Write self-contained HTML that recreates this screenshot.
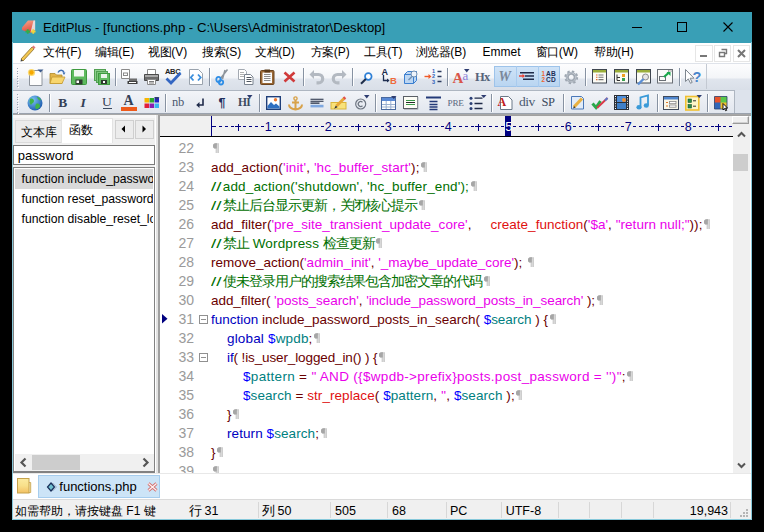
<!DOCTYPE html><html><head><meta charset="utf-8"><style>
*{margin:0;padding:0;box-sizing:border-box}
html,body{width:764px;height:532px;overflow:hidden;background:#000}
body{position:relative;font-family:"Liberation Sans",sans-serif;}
.a{position:absolute}
.t{position:absolute;white-space:pre;line-height:1}
.cj{display:inline-block;overflow:visible;text-align:center}
svg{position:absolute;overflow:visible}
</style></head><body>
<div class="a" style="left:12px;top:12px;width:740px;height:508px;background:#fff;"></div>
<div class="a" style="left:12px;top:12px;width:740px;height:31px;background:#399fb6;"></div>
<div class="t" style="left:43px;top:20.83px;font-size:13.2px;color:#000;">EditPlus - [functions.php - C:\Users\Administrator\Desktop]</div>
<div class="a" style="left:632px;top:27px;width:10px;height:1px;background:#000;"></div>
<div class="a" style="left:677px;top:22px;width:10px;height:10px;background:transparent;border:1px solid #000"></div>
<svg style="left:723px;top:22px" width="10" height="10"><path d="M0.5 0.5L9.5 9.5M9.5 0.5L0.5 9.5" stroke="#000" stroke-width="1.1"/></svg>
<svg style="left:21px;top:19px" width="16" height="17"><defs><linearGradient id="eg" x1="0" y1="0" x2="0.3" y2="1"><stop offset="0" stop-color="#f7a68e"/><stop offset="1" stop-color="#de4a3a"/></linearGradient></defs><path d="M1 8.5L7 1.5L14 1.5L14 11L9 14L1 11Z" fill="url(#eg)"/><path d="M12.5 1.5L14.2 1.5L14.2 11L9.5 13.5Z" fill="#e8edf2" opacity="0.85"/><path d="M4.5 12.5h4.5M6.75 10.2v4.6" stroke="#2fae4a" stroke-width="1.8"/><path d="M10 12.5h4.5M12.25 10.2v4.6" stroke="#f3d23a" stroke-width="1.8"/></svg>
<div class="a" style="left:12px;top:43px;width:740px;height:20px;background:#fff;"></div>
<div class="a" style="left:12px;top:63px;width:740px;height:1px;background:#dfe3ea;"></div>
<svg style="left:19px;top:44px" width="18" height="18"><path d="M3 16 L2 15 L13 3 L15 5 L4 17Z" fill="#f3c64f" stroke="#8a6d2b" stroke-width="0.8"/><path d="M13 3 L14.5 1.5 L16.5 3.5 L15 5Z" fill="#e07a7a"/><path d="M2 15 L1.5 17.5 L4 17Z" fill="#444"/></svg>
<div class="t" style="left:43px;top:46.35px;font-size:12px;color:#000;"><span class="cj" style="width:11.6px">文</span><span class="cj" style="width:11.6px">件</span>(F)</div>
<div class="t" style="left:95px;top:46.35px;font-size:12px;color:#000;"><span class="cj" style="width:11.6px">编</span><span class="cj" style="width:11.6px">辑</span>(E)</div>
<div class="t" style="left:148px;top:46.35px;font-size:12px;color:#000;"><span class="cj" style="width:11.6px">视</span><span class="cj" style="width:11.6px">图</span>(V)</div>
<div class="t" style="left:202px;top:46.35px;font-size:12px;color:#000;"><span class="cj" style="width:11.6px">搜</span><span class="cj" style="width:11.6px">索</span>(S)</div>
<div class="t" style="left:255px;top:46.35px;font-size:12px;color:#000;"><span class="cj" style="width:11.6px">文</span><span class="cj" style="width:11.6px">档</span>(D)</div>
<div class="t" style="left:310.5px;top:46.35px;font-size:12px;color:#000;"><span class="cj" style="width:11.6px">方</span><span class="cj" style="width:11.6px">案</span>(P)</div>
<div class="t" style="left:364px;top:46.35px;font-size:12px;color:#000;"><span class="cj" style="width:11.6px">工</span><span class="cj" style="width:11.6px">具</span>(T)</div>
<div class="t" style="left:415.5px;top:46.35px;font-size:12px;color:#000;"><span class="cj" style="width:11.6px">浏</span><span class="cj" style="width:11.6px">览</span><span class="cj" style="width:11.6px">器</span>(B)</div>
<div class="t" style="left:482.5px;top:46.35px;font-size:12px;color:#000;">Emmet</div>
<div class="t" style="left:535.5px;top:46.35px;font-size:12px;color:#000;"><span class="cj" style="width:11.6px">窗</span><span class="cj" style="width:11.6px">口</span>(W)</div>
<div class="t" style="left:594px;top:46.35px;font-size:12px;color:#000;"><span class="cj" style="width:11.6px">帮</span><span class="cj" style="width:11.6px">助</span>(H)</div>
<div class="a" style="left:695px;top:44.5px;width:17.5px;height:17.5px;background:#fff;border:1px solid #e6e6e6"></div>
<div class="a" style="left:713.5px;top:44.5px;width:17.5px;height:17.5px;background:#fff;border:1px solid #e6e6e6"></div>
<div class="a" style="left:732.5px;top:44.5px;width:17.5px;height:17.5px;background:#fff;border:1px solid #e6e6e6"></div>
<div class="a" style="left:700px;top:55px;width:7px;height:2px;background:#777;"></div>
<svg style="left:718px;top:48px" width="10" height="10"><path d="M3.5 1.5h5v4h-2M1.5 4.5h5v4h-5z" fill="none" stroke="#777" stroke-width="1.4"/></svg>
<svg style="left:737px;top:49px" width="9" height="9"><path d="M1 1L8 8M8 1L1 8" stroke="#777" stroke-width="2"/></svg>
<div class="a" style="left:13px;top:64px;width:738px;height:26px;background:linear-gradient(#fdfdfe 0,#f3f5f8 14px,#e0e5ed 15px,#d9dfe8 26px);"></div>
<div class="a" style="left:13px;top:90px;width:738px;height:24px;background:#dde3ec;"></div>
<div class="a" style="left:13px;top:90px;width:722px;height:24px;background:linear-gradient(#f2f4f8,#e1e6ee);border-top:1px solid #aeb6c1;border-right:1px solid #aeb6c1"></div>
<div class="a" style="left:706px;top:64px;width:1px;height:25px;background:#c3c9d2;"></div>
<div class="a" style="left:13px;top:113px;width:738px;height:1px;background:#9aa2ad;"></div>
<div class="a" style="left:12px;top:114px;width:740px;height:1px;background:#a7a7a7;"></div>
<div class="a" style="left:17px;top:68.0px;width:1px;height:1px;background:#9aa5b4;"></div>
<div class="a" style="left:18px;top:69.0px;width:1px;height:1px;background:#fff;"></div>
<div class="a" style="left:17px;top:70.5px;width:1px;height:1px;background:#9aa5b4;"></div>
<div class="a" style="left:18px;top:71.5px;width:1px;height:1px;background:#fff;"></div>
<div class="a" style="left:17px;top:73.0px;width:1px;height:1px;background:#9aa5b4;"></div>
<div class="a" style="left:18px;top:74.0px;width:1px;height:1px;background:#fff;"></div>
<div class="a" style="left:17px;top:75.5px;width:1px;height:1px;background:#9aa5b4;"></div>
<div class="a" style="left:18px;top:76.5px;width:1px;height:1px;background:#fff;"></div>
<div class="a" style="left:17px;top:78.0px;width:1px;height:1px;background:#9aa5b4;"></div>
<div class="a" style="left:18px;top:79.0px;width:1px;height:1px;background:#fff;"></div>
<div class="a" style="left:17px;top:80.5px;width:1px;height:1px;background:#9aa5b4;"></div>
<div class="a" style="left:18px;top:81.5px;width:1px;height:1px;background:#fff;"></div>
<div class="a" style="left:17px;top:83.0px;width:1px;height:1px;background:#9aa5b4;"></div>
<div class="a" style="left:18px;top:84.0px;width:1px;height:1px;background:#fff;"></div>
<div class="a" style="left:17px;top:85.5px;width:1px;height:1px;background:#9aa5b4;"></div>
<div class="a" style="left:18px;top:86.5px;width:1px;height:1px;background:#fff;"></div>
<div class="a" style="left:17px;top:94.0px;width:1px;height:1px;background:#9aa5b4;"></div>
<div class="a" style="left:18px;top:95.0px;width:1px;height:1px;background:#fff;"></div>
<div class="a" style="left:17px;top:96.5px;width:1px;height:1px;background:#9aa5b4;"></div>
<div class="a" style="left:18px;top:97.5px;width:1px;height:1px;background:#fff;"></div>
<div class="a" style="left:17px;top:99.0px;width:1px;height:1px;background:#9aa5b4;"></div>
<div class="a" style="left:18px;top:100.0px;width:1px;height:1px;background:#fff;"></div>
<div class="a" style="left:17px;top:101.5px;width:1px;height:1px;background:#9aa5b4;"></div>
<div class="a" style="left:18px;top:102.5px;width:1px;height:1px;background:#fff;"></div>
<div class="a" style="left:17px;top:104.0px;width:1px;height:1px;background:#9aa5b4;"></div>
<div class="a" style="left:18px;top:105.0px;width:1px;height:1px;background:#fff;"></div>
<div class="a" style="left:17px;top:106.5px;width:1px;height:1px;background:#9aa5b4;"></div>
<div class="a" style="left:18px;top:107.5px;width:1px;height:1px;background:#fff;"></div>
<div class="a" style="left:17px;top:109.0px;width:1px;height:1px;background:#9aa5b4;"></div>
<div class="a" style="left:18px;top:110.0px;width:1px;height:1px;background:#fff;"></div>
<div class="a" style="left:17px;top:111.5px;width:1px;height:1px;background:#9aa5b4;"></div>
<div class="a" style="left:18px;top:112.5px;width:1px;height:1px;background:#fff;"></div>
<svg style="left:27px;top:68px" width="17" height="18" viewBox="0 0 17 18"><path d="M2.5 2.5h12.5v15h-12.5z" fill="#fdfdfd" stroke="#8e949c"/><circle cx="4.5" cy="4.5" r="3.6" fill="#ffd24a" opacity="0.8"/><circle cx="4.5" cy="4.5" r="2.2" fill="#f7a800"/><path d="M10.5 1.5h6L13.5 4.5Z" fill="#3b5a8c"/></svg>
<svg style="left:49px;top:68px" width="17" height="17" viewBox="0 0 17 17"><path d="M1 5.5h5l1.5 1.5h5.5v8.5h-12z" fill="#e3b54a" stroke="#b08a2a" stroke-width="0.8"/><path d="M3 9h13l-3 6.5h-12z" fill="#f8d66e" stroke="#c49a32" stroke-width="0.8"/><path d="M9 4.5c1.5-3 5-3 6 0" fill="none" stroke="#3f6fb3" stroke-width="1.5"/><path d="M13.5 4.5h3l-1.5 2.5z" fill="#3f6fb3"/></svg>
<svg style="left:71px;top:69px" width="16" height="16" viewBox="0 0 16 16"><rect x="0.5" y="0.5" width="15" height="15" rx="1" fill="#5dba5d" stroke="#3f9a3f"/><rect x="3" y="1" width="10" height="6.5" fill="#f2f8f2"/><rect x="4.5" y="10.5" width="7" height="5" fill="#2f3a2f"/><rect x="5.5" y="11.5" width="2.5" height="2.5" fill="#fff"/></svg>
<svg style="left:94px;top:69px" width="16" height="16" viewBox="0 0 16 16"><rect x="0.5" y="0.5" width="11" height="11" fill="#8fd08f" stroke="#52a052"/><rect x="2.5" y="2.5" width="11" height="11" fill="#7cc67c" stroke="#52a052"/><rect x="4.5" y="4.5" width="11" height="11" fill="#62bb62" stroke="#3f9a3f"/><rect x="7" y="5" width="6" height="4" fill="#eaf5ea"/><rect x="7" y="11" width="6" height="4" fill="#2c3a2c"/><rect x="9" y="12" width="2" height="2" fill="#fff"/></svg>
<div class="a" style="left:114.5px;top:68px;width:1px;height:18px;background:#8792a2"></div><div class="a" style="left:115.5px;top:68px;width:1px;height:18px;background:#fff"></div>
<svg style="left:121px;top:69px" width="17" height="16" viewBox="0 0 17 16"><path d="M0.5 0.5h8v9h-8z" fill="#fff" stroke="#8a8a8a"/><rect x="2.5" y="4" width="4" height="2.5" fill="none" stroke="#8a8a8a"/><rect x="8" y="9.5" width="8" height="3" fill="#6d6d6d"/><rect x="6.5" y="12" width="10" height="3" fill="#3f3f3f"/><rect x="8" y="13" width="7" height="1" fill="#fff"/></svg>
<svg style="left:143px;top:69px" width="17" height="16" viewBox="0 0 17 16"><path d="M4.5 0.5h8v5h-8z" fill="#fff" stroke="#8a8a8a"/><path d="M1.5 5.5h14v6h-14z" fill="#6b6b6b" stroke="#4a4a4a"/><rect x="2" y="6" width="13" height="2" fill="#a8a8a8"/><path d="M4.5 10.5h8v5h-8z" fill="#fff" stroke="#8a8a8a"/><path d="M6 12.5h5M6 14h5" stroke="#555" stroke-width="0.8"/></svg>
<div class="t" style="left:165px;top:68px;font-size:7.5px;font-weight:bold;color:#222;letter-spacing:-0.3px">ABC</div>
<svg style="left:165px;top:71px" width="17" height="14" viewBox="0 0 17 14"><path d="M1.5 7.5L6 12L15.5 2" fill="none" stroke="#3466c2" stroke-width="2.8"/></svg>
<svg style="left:188px;top:69px" width="16" height="16" viewBox="0 0 16 16"><path d="M1.5 0.5h9l4 4v11h-13z" fill="#fff" stroke="#9aa3ad"/><path d="M5.5 5.5L2.8 8.5L5.5 11.5M10 5.5L12.7 8.5L10 11.5" fill="none" stroke="#3c8fdc" stroke-width="1.8"/></svg>
<div class="a" style="left:208.5px;top:68px;width:1px;height:18px;background:#8792a2"></div><div class="a" style="left:209.5px;top:68px;width:1px;height:18px;background:#fff"></div>
<svg style="left:215px;top:69px" width="14" height="16" viewBox="0 0 14 16"><path d="M5.5 9.5L12.5 0.5M7.5 10L10 1" stroke="#8d949c" stroke-width="1.5"/><ellipse cx="3.5" cy="10.5" rx="2.2" ry="2.6" fill="none" stroke="#2f8ee6" stroke-width="1.8"/><ellipse cx="6" cy="13.3" rx="2.2" ry="2.2" fill="none" stroke="#2f8ee6" stroke-width="1.8"/></svg>
<svg style="left:238px;top:69px" width="16" height="16" viewBox="0 0 16 16"><path d="M0.5 0.5h6l2 2v8h-8z" fill="#fff" stroke="#a4aab2"/><path d="M2 3.5h4M2 5.5h4M2 7.5h4" stroke="#b0b0b0" stroke-width="1"/><path d="M6.5 5.5h6l2.5 2.5v7.5h-8.5z" fill="#fff" stroke="#7b8490"/><path d="M8.5 8.5h5M8.5 10.5h5M8.5 12.5h5" stroke="#4f5660" stroke-width="1"/></svg>
<svg style="left:260px;top:69px" width="15" height="16" viewBox="0 0 15 16"><rect x="0.5" y="1.5" width="13.5" height="14" rx="1" fill="#9a6834" stroke="#6a4420"/><rect x="2.5" y="3.5" width="9.5" height="10.5" fill="#fafafa"/><rect x="4.5" y="0.5" width="5.5" height="3" fill="#5a3a1a"/><path d="M4 5.5h6.5M4 7.5h6.5M4 9.5h6.5M4 11.5h6.5" stroke="#8a8a8a" stroke-width="1"/></svg>
<svg style="left:283px;top:71px" width="13" height="12" viewBox="0 0 13 12"><path d="M1.5 1.5L11.5 10.5M11.5 1.5L1.5 10.5" stroke="#d03a3a" stroke-width="2.6"/></svg>
<div class="a" style="left:302.5px;top:68px;width:1px;height:18px;background:#8792a2"></div><div class="a" style="left:303.5px;top:68px;width:1px;height:18px;background:#fff"></div>
<svg style="left:309px;top:69px" width="16" height="16" viewBox="0 0 16 16"><path d="M3 5.5h6.5a4.2 4.2 0 0 1 0 8.4h-2" fill="none" stroke="#b3b9c1" stroke-width="3.2"/><path d="M0.5 5.5L5 1v9z" fill="#b3b9c1"/></svg>
<svg style="left:331px;top:69px" width="16" height="16" viewBox="0 0 16 16"><path d="M13 5.5h-6.5a4.2 4.2 0 0 0 0 8.4h2" fill="none" stroke="#b3b9c1" stroke-width="3.2"/><path d="M15.5 5.5L11 1v9z" fill="#b3b9c1"/></svg>
<div class="a" style="left:352px;top:68px;width:1px;height:18px;background:#8792a2"></div><div class="a" style="left:353px;top:68px;width:1px;height:18px;background:#fff"></div>
<svg style="left:359px;top:71px" width="15" height="14" viewBox="0 0 15 14"><circle cx="9.3" cy="5.5" r="3.3" fill="#fff" stroke="#2d7fd6" stroke-width="1.7"/><path d="M6.8 8L2 12.8" stroke="#1e2d4a" stroke-width="2"/></svg>
<div class="t" style="left:381.5px;top:67.5px;font-size:9px;font-weight:bold;color:#1e2d50">A</div>
<svg style="left:381px;top:75px" width="10" height="9" viewBox="0 0 10 9"><path d="M2.5 0v5.5h5" fill="none" stroke="#1e2d50" stroke-width="1.3"/><path d="M6 3.5l2.5 2-2.5 2z" fill="#1e2d50"/></svg>
<div class="t" style="left:390px;top:76px;font-size:9.5px;font-weight:bold;color:#f06a3a">B</div>
<svg style="left:403px;top:70px" width="16" height="15" viewBox="0 0 16 15"><path d="M1.5 4.5l3-3h9v9l-3 3h-9z" fill="#bcd6f2" stroke="#3b7fd0"/><path d="M1.5 4.5h9v9M10.5 4.5l3-3" fill="none" stroke="#3b7fd0"/><circle cx="11" cy="4" r="3" fill="#eef4fb" stroke="#6f8fb3"/><path d="M9 6.5L5.5 10" stroke="#6f8fb3" stroke-width="1.5"/></svg>
<svg style="left:424px;top:70px" width="18" height="16" viewBox="0 0 18 16"><path d="M0.5 6.5h5" stroke="#f05a28" stroke-width="1.4"/><path d="M4.5 4l3 2.5-3 2.5z" fill="#f05a28"/><path d="M13.5 1.5h4M13.5 6.5h4M13.5 11.5h4" stroke="#2b3b5e" stroke-width="1.4"/></svg>
<div class="t" style="left:432px;top:69px;font-size:5.6px;line-height:5.4px;font-weight:bold;color:#2f62b8">1<br>2<br>3</div>
<div class="a" style="left:447px;top:68px;width:1px;height:18px;background:#8792a2"></div><div class="a" style="left:448px;top:68px;width:1px;height:18px;background:#fff"></div>
<div class="t" style="left:452.5px;top:71.31px;font-size:15px;color:#d9564a;font-family:'Liberation Serif',serif;font-weight:bold;font-style:normal;letter-spacing:0px">A</div>
<div class="t" style="left:462.5px;top:69.30199999999999px;font-size:13px;color:#8a7fd8;font-family:'Liberation Serif',serif;font-weight:normal;font-style:normal;letter-spacing:0px">a</div>
<svg style="left:464px;top:69px" width="6" height="4" viewBox="0 0 6 4"><path d="M0 0H5.5L2.75 3.5Z" fill="#2d3c70"/></svg>
<div class="t" style="left:475px;top:71.225px;font-size:12.5px;color:#56647a;font-family:'Liberation Serif',serif;font-weight:bold;font-style:normal;letter-spacing:-0.6px">Hx</div>
<div class="a" style="left:494px;top:66px;width:66px;height:21px;background:linear-gradient(#cfe3f7,#b9d5f1);border:1px solid #9dc3ea"></div>
<div class="a" style="left:515.5px;top:66px;width:1px;height:21px;background:#a9cbee"></div><div class="a" style="left:538px;top:66px;width:1px;height:21px;background:#a9cbee"></div>
<div class="t" style="left:498.5px;top:69.956px;font-size:14px;color:#7a879a;font-family:'Liberation Serif',serif;font-weight:bold;font-style:italic;letter-spacing:0px">W</div>
<svg style="left:519px;top:72px" width="16" height="9" viewBox="0 0 16 9"><path d="M1 0.8h14M6 4h9M4 7.2h11" stroke="#1f2a48" stroke-width="1.5"/><path d="M0 4h4" stroke="#ee3a2a" stroke-width="1.4"/><path d="M3.5 2l2.5 2-2.5 2z" fill="#ee3a2a"/></svg>
<div class="t" style="left:541.5px;top:71px;font-size:6.3px;line-height:6px;font-weight:bold;color:#f0642e">1<br>2</div>
<div class="t" style="left:546px;top:71px;font-size:6.6px;line-height:6px;font-weight:bold;color:#1e2d55;letter-spacing:0.2px">AB<br>CD</div>
<svg style="left:563px;top:69px" width="17" height="17" viewBox="0 0 17 17"><g transform="translate(8.25,8.25)"><circle r="5.8" fill="none" stroke="#9ea6b0" stroke-width="2.2" stroke-dasharray="2.3 2.25"/><circle r="5" fill="none" stroke="#aab2bc" stroke-width="1.2"/><circle r="3.3" fill="none" stroke="#a0a8b2" stroke-width="1.8"/></g></svg>
<div class="a" style="left:584.5px;top:68px;width:1px;height:18px;background:#8792a2"></div><div class="a" style="left:585.5px;top:68px;width:1px;height:18px;background:#fff"></div>
<svg style="left:591.5px;top:69px" width="15" height="15" viewBox="0 0 15 15"><rect x="0.5" y="0.5" width="14" height="13.5" fill="#fbfbf5" stroke="#3f4650"/><rect x="1" y="1" width="13" height="2.5" fill="#9aae3a"/><path d="M4 6h1.5M4 8.3h1.5M4 10.6h1.5" stroke="#e86a2a" stroke-width="1.1"/><path d="M6.5 6h5M6.5 8.3h5M6.5 10.6h5" stroke="#777" stroke-width="1.1"/></svg>
<svg style="left:613.5px;top:69px" width="15" height="15" viewBox="0 0 15 15"><rect x="0.5" y="0.5" width="14" height="13.5" fill="#fbfbf5" stroke="#3f4650"/><rect x="1" y="1" width="13" height="2.5" fill="#9aae3a"/><path d="M3 5.5v6h3M3 8.5h3" fill="none" stroke="#333" stroke-width="1"/><rect x="8" y="5" width="3" height="3" fill="#f0a020"/><rect x="8" y="9" width="3" height="3" fill="#3aa050"/></svg>
<svg style="left:635.5px;top:69px" width="15" height="15" viewBox="0 0 15 15"><rect x="0.5" y="0.5" width="14" height="13.5" fill="#fbfbf5" stroke="#3f4650"/><rect x="1" y="1" width="13" height="2.5" fill="#9aae3a"/><circle cx="9.5" cy="8" r="3" fill="#e6e6e6" stroke="#8a8a8a"/><path d="M7.5 10L2 15.5" stroke="#5b8fd6" stroke-width="2.4"/></svg>
<svg style="left:657px;top:69px" width="16" height="15" viewBox="0 0 16 15"><rect x="0.5" y="0.5" width="15" height="13.5" fill="#fafafa" stroke="#6a6f76"/><path d="M11 2h1M12.5 2h1M14 2h0.6" stroke="#555"/><rect x="2.5" y="7.5" width="6" height="4" fill="none" stroke="#6a6f76"/><path d="M7 8L12 3.5" stroke="#19a84a" stroke-width="2.2"/><path d="M9.5 3h4v4z" fill="#19a84a"/></svg>
<div class="a" style="left:678.5px;top:68px;width:1px;height:18px;background:#8792a2"></div><div class="a" style="left:679.5px;top:68px;width:1px;height:18px;background:#fff"></div>
<svg style="left:684px;top:69px" width="18" height="16" viewBox="0 0 18 16"><path d="M1.5 0.5v12l2.8-2.6 2.2 4.4 1.7-.9-2.1-4.2h3.9z" fill="#fff" stroke="#7e868f" stroke-width="1"/></svg>
<div class="t" style="left:692.5px;top:70.233px;font-size:14.5px;color:#4a86cc;font-family:'Liberation Sans',serif;font-weight:bold;font-style:normal;letter-spacing:0px">?</div>
<svg style="left:26.5px;top:95px" width="16" height="16" viewBox="0 0 16 16"><defs><radialGradient id="gb" cx="0.35" cy="0.3" r="0.8"><stop offset="0" stop-color="#7ec6f5"/><stop offset="1" stop-color="#1452a8"/></radialGradient></defs><circle cx="8" cy="8" r="7.5" fill="url(#gb)"/><path d="M3 4c2-1 4 0 4 2s-2 2-3 4c-1-1-2-3-1-6zM9 9c2-1 4 0 4 2s-2 3-4 3c-1-1-1-3 0-5zM10 2c2 0 3 1 4 3-1 1-3 0-4-3z" fill="#3fb44a"/></svg>
<div class="a" style="left:48.5px;top:94px;width:1px;height:18px;background:#8792a2"></div><div class="a" style="left:49.5px;top:94px;width:1px;height:18px;background:#fff"></div>
<div class="t" style="left:58.3px;top:96.47900000000001px;font-size:13.5px;color:#344055;font-family:'Liberation Serif',serif;font-weight:bold;font-style:normal;letter-spacing:0px">B</div>
<div class="t" style="left:80.5px;top:96.47900000000001px;font-size:13.5px;color:#344055;font-family:'Liberation Serif',serif;font-weight:bold;font-style:italic;letter-spacing:0px">I</div>
<div class="t" style="left:102px;top:95.179px;font-size:13.5px;color:#344055;font-family:'Liberation Serif',serif;font-weight:normal;font-style:normal;letter-spacing:0px">U</div>
<div class="a" style="left:103px;top:107.5px;width:9px;height:1px;background:#3d4b60"></div>
<div class="t" style="left:123.5px;top:94.156px;font-size:14px;color:#344055;font-family:'Liberation Serif',serif;font-weight:bold;font-style:normal;letter-spacing:0px">A</div>
<div class="a" style="left:121px;top:107px;width:16px;height:4px;background:#ee5a1a"></div>
<svg style="left:143.5px;top:97px" width="16" height="13" viewBox="0 0 16 13"><rect x="0.5" y="1" width="4.5" height="4.5" fill="#f7b500"/><rect x="5.5" y="1" width="4.5" height="4.5" fill="#2ea82e"/><rect x="10.5" y="1" width="4.5" height="4.5" fill="#2424c8"/><rect x="0.5" y="6.5" width="4.5" height="4.5" fill="#e21f3a"/><rect x="5.5" y="6.5" width="4.5" height="4.5" fill="#8a1fb0"/><rect x="10.5" y="6.5" width="4.5" height="4.5" fill="#3ab6f0"/><path d="M10 0H15.5L12.75 3Z" fill="#2d3c70"/></svg>
<div class="a" style="left:164.5px;top:94px;width:1px;height:18px;background:#8792a2"></div><div class="a" style="left:165.5px;top:94px;width:1px;height:18px;background:#fff"></div>
<div class="t" style="left:172px;top:96.02499999999999px;font-size:12.5px;color:#4a5870;font-family:'Liberation Serif',serif;font-weight:normal;font-style:normal;letter-spacing:-0.3px">nb</div>
<svg style="left:196px;top:98px" width="9" height="11" viewBox="0 0 9 11"><path d="M7 0.5v6.5h-5" fill="none" stroke="#1f2a4a" stroke-width="1.6"/><path d="M3.5 4L0.2 7L3.5 10z" fill="#1f2a4a"/></svg>
<div class="t" style="left:218.5px;top:97.425px;font-size:12.5px;color:#1f2f5e;font-family:'Liberation Sans',serif;font-weight:bold;font-style:normal;letter-spacing:0px">¶</div>
<div class="t" style="left:238px;top:96.871px;font-size:11.5px;color:#3d4b60;font-family:'Liberation Serif',serif;font-weight:bold;font-style:normal;letter-spacing:-0.6px">HI</div>
<svg style="left:247px;top:95px" width="6" height="4" viewBox="0 0 6 4"><path d="M0 0H5.5L2.75 3.5Z" fill="#2d3c70"/></svg>
<div class="a" style="left:258.5px;top:94px;width:1px;height:18px;background:#8792a2"></div><div class="a" style="left:259.5px;top:94px;width:1px;height:18px;background:#fff"></div>
<svg style="left:266px;top:96px" width="15" height="14" viewBox="0 0 15 14"><rect x="0.7" y="0.7" width="13.6" height="12.6" fill="#fff" stroke="#1f3f7a" stroke-width="1.4"/><path d="M1.5 10L5 6l3 3 2-1.5 3.5 3V12.5h-12z" fill="#2f6fc0"/><circle cx="9.5" cy="3.8" r="1.7" fill="#f07a30"/></svg>
<svg style="left:288px;top:96px" width="15" height="14" viewBox="0 0 15 14"><circle cx="7.5" cy="2.5" r="1.6" fill="none" stroke="#d8a24a" stroke-width="1.4"/><path d="M7.5 4v9.5M4 6.5h7M1 8.5c0 3 3 4.5 6.5 5 3.5-.5 6.5-2 6.5-5" fill="none" stroke="#d8a24a" stroke-width="2"/></svg>
<svg style="left:310px;top:98px" width="14" height="10" viewBox="0 0 14 10"><path d="M0.5 1.3h13M0.5 3.2h13M0.5 5.1h9" stroke="#1f2a40" stroke-width="1.1"/><rect x="0.5" y="6.8" width="13" height="2.6" fill="#7ea8e0"/></svg>
<svg style="left:330px;top:96px" width="18" height="14" viewBox="0 0 18 14"><rect x="1" y="6.5" width="15" height="6.5" fill="#f8e27a" stroke="#d9b53a"/><path d="M6.5 10L14.5 2" stroke="#e8a838" stroke-width="3"/><path d="M13.5 1l2 2" stroke="#e05050" stroke-width="2"/><path d="M6 10.5l-0.5 1 1-.5z" stroke="#333" stroke-width="1.2"/></svg>
<svg style="left:355px;top:98px" width="12" height="12" viewBox="0 0 12 12"><circle cx="5.7" cy="6" r="5" fill="none" stroke="#6e7682" stroke-width="1.2"/><path d="M7.5 4.2a2.5 2.5 0 1 0 0 3.6" fill="none" stroke="#6e7682" stroke-width="1.2"/></svg>
<svg style="left:364px;top:95px" width="6" height="4" viewBox="0 0 6 4"><path d="M0 0H5.5L2.75 3.5Z" fill="#2d3c70"/></svg>
<div class="a" style="left:374.5px;top:94px;width:1px;height:18px;background:#8792a2"></div><div class="a" style="left:375.5px;top:94px;width:1px;height:18px;background:#fff"></div>
<svg style="left:381px;top:96px" width="16" height="14" viewBox="0 0 16 14"><rect x="0.5" y="1.5" width="14" height="12" fill="#fff" stroke="#4a6aa0"/><rect x="1" y="2" width="13" height="3" fill="#5a8ad6"/><path d="M1 8.5h13M1 11h13M5.2 5v8M9.8 5v8" stroke="#9ab0d0" stroke-width="1"/><path d="M10 0H15.5L12.75 3Z" fill="#2d3c70"/></svg>
<svg style="left:403px;top:96px" width="16" height="14" viewBox="0 0 16 14"><rect x="0.5" y="0.5" width="14" height="12" fill="#fdfdf6" stroke="#5a5f66"/><path d="M15 1v12.5H1" fill="none" stroke="#b8bcc2"/><path d="M3 4.5h9M3 8.5h9" stroke="#3a9a48" stroke-width="1"/><path d="M3 6.5h9" stroke="#2a2a2a" stroke-width="1"/></svg>
<svg style="left:426px;top:96px" width="15" height="14" viewBox="0 0 15 14"><path d="M0 1.5h15" stroke="#243a78" stroke-width="2"/><path d="M3.5 5.5h8M3.5 8.5h8M3.5 11h8M3.5 13.5h8" stroke="#243a78" stroke-width="1.3"/></svg>
<div class="t" style="left:447.5px;top:98.5168px;font-size:9.2px;color:#5a6880;font-family:'Liberation Serif',serif;font-weight:normal;font-style:normal;letter-spacing:-0.2px">PRE</div>
<svg style="left:469px;top:95px" width="18" height="15" viewBox="0 0 18 15"><circle cx="2" cy="3.2" r="1.5" fill="#2a3f75"/><circle cx="2" cy="8.5" r="1.5" fill="#2a3f75"/><circle cx="2" cy="13.5" r="1.5" fill="#2a3f75"/><path d="M5.5 3.2h8M5.5 8.5h8M5.5 13.5h8" stroke="#1f2a48" stroke-width="1.3"/><path d="M12 0H17.5L14.75 3Z" fill="#2d3c70"/></svg>
<div class="a" style="left:490.5px;top:94px;width:1px;height:18px;background:#8792a2"></div><div class="a" style="left:491.5px;top:94px;width:1px;height:18px;background:#fff"></div>
<svg style="left:498px;top:96px" width="15" height="14" viewBox="0 0 15 14"><path d="M2.5 0.5h8l3.5 3.5v9.5h-11.5z" fill="#fff" stroke="#6a7888"/></svg>
<div class="t" style="left:497.5px;top:96.348px;font-size:12px;color:#c01a20;font-family:'Liberation Serif',serif;font-weight:bold;font-style:normal;letter-spacing:0px">A</div>
<div class="t" style="left:519px;top:95.07900000000001px;font-size:13.5px;color:#4a5870;font-family:'Liberation Serif',serif;font-weight:normal;font-style:normal;letter-spacing:-0.5px">div</div>
<div class="t" style="left:541.5px;top:95.925px;font-size:12.5px;color:#3d4b60;font-family:'Liberation Serif',serif;font-weight:normal;font-style:normal;letter-spacing:-0.4px">SP</div>
<div class="a" style="left:562.5px;top:94px;width:1px;height:18px;background:#8792a2"></div><div class="a" style="left:563.5px;top:94px;width:1px;height:18px;background:#fff"></div>
<svg style="left:569.5px;top:95px" width="16" height="15" viewBox="0 0 16 15"><path d="M1.5 1.5h10l2 2v10.5h-12z" fill="#e2ecf8" stroke="#4a78b8"/><path d="M4 12L12 3.5" stroke="#e8b040" stroke-width="3.2"/><path d="M3 13.5l1-2.5 1.5 1.5z" fill="#333"/></svg>
<svg style="left:590.5px;top:96px" width="18" height="14" viewBox="0 0 18 14"><path d="M1.5 7.5L5 11.5L9.5 5" fill="none" stroke="#2aa84a" stroke-width="3"/><path d="M6 12L16.5 2" stroke="#d83a4a" stroke-width="2"/><path d="M14 4.5L16.5 2" stroke="#5a78c8" stroke-width="2"/></svg>
<svg style="left:614px;top:95px" width="15" height="15" viewBox="0 0 15 15"><rect x="0" y="0" width="15" height="15" fill="#2a2f38"/><rect x="3" y="1" width="9" height="6" fill="#4f8ed8"/><rect x="3" y="8" width="9" height="6" fill="#3f7fc8"/><circle cx="10" cy="5" r="2" fill="#f09030"/><path d="M1.5 1v13M13.5 1v13" stroke="#fff" stroke-width="1" stroke-dasharray="1 1.4"/></svg>
<svg style="left:636px;top:95px" width="13" height="15" viewBox="0 0 13 15"><path d="M4.5 12V2.5L12 0.5V10" fill="none" stroke="#3a9ad8" stroke-width="1.8"/><ellipse cx="3" cy="12.3" rx="2.6" ry="2.2" fill="#3a9ad8"/><ellipse cx="10.3" cy="10.5" rx="2.6" ry="2.2" fill="#3a9ad8"/></svg>
<div class="a" style="left:656.5px;top:94px;width:1px;height:18px;background:#8792a2"></div><div class="a" style="left:657.5px;top:94px;width:1px;height:18px;background:#fff"></div>
<svg style="left:662.5px;top:96px" width="16" height="14" viewBox="0 0 16 14"><rect x="0.5" y="0.5" width="15" height="13" fill="#f8f6e8" stroke="#3f4a5c"/><rect x="1" y="1" width="14" height="2.5" fill="#4f86d0"/><path d="M3 6.5h2M3 10h2" stroke="#e0782a" stroke-width="1"/><rect x="6.5" y="5.5" width="6.5" height="2.2" fill="#fff" stroke="#888" stroke-width="0.8"/><rect x="6.5" y="9" width="6.5" height="2.2" fill="#fff" stroke="#888" stroke-width="0.8"/></svg>
<svg style="left:684.5px;top:95px" width="18" height="16" viewBox="0 0 18 16"><rect x="0.8" y="1.5" width="13" height="13.5" fill="#fdf6c8" stroke="#f0c030" stroke-width="1.6"/><rect x="3" y="4" width="3.5" height="3.5" fill="#2a8a4a" stroke="#1a5a2a" stroke-width="0.6"/><rect x="3" y="9.5" width="3.5" height="3.5" fill="#2a8a4a" stroke="#1a5a2a" stroke-width="0.6"/><path d="M8 5.8h3M8 11.2h3" stroke="#333" stroke-width="1"/><path d="M11.5 0H17L14.25 3Z" fill="#2d3c70"/></svg>
<div class="a" style="left:706.5px;top:94px;width:1px;height:18px;background:#8792a2"></div><div class="a" style="left:707.5px;top:94px;width:1px;height:18px;background:#fff"></div>
<svg style="left:714px;top:96px" width="15" height="15" viewBox="0 0 15 15"><rect x="0.5" y="0.5" width="6.5" height="6.5" fill="#e8532a"/><rect x="6.5" y="0.5" width="6.5" height="6.5" fill="#5ac84a"/><rect x="0.5" y="6.5" width="6.5" height="6.5" fill="#3066b8"/><rect x="6.5" y="6.5" width="6.5" height="6.5" fill="#f0c030"/><path d="M0.5 0.5h12.5v12.5h-12.5z" fill="none" stroke="#2a3f6a" stroke-width="0.8"/><path d="M9 7.5v6.5l1.5-1.5 1.2 2.3 1-.5-1.2-2.3h2z" fill="#fff" stroke="#000" stroke-width="0.9"/></svg>
<div class="a" style="left:13px;top:115px;width:145px;height:358px;background:#f0f0f0;"></div>
<div class="a" style="left:13px;top:115px;width:145px;height:3px;background:#f7f7f7;"></div>
<div class="a" style="left:15px;top:120px;width:47px;height:23px;background:#ececec;border:1px solid #dadada"></div>
<div class="a" style="left:61px;top:118px;width:52px;height:25px;background:#fff;border:1px solid #e3e3e3;border-bottom:0"></div>
<div class="t" style="left:21px;top:125.85px;font-size:12px;color:#000;"><span class="cj" style="width:12px">文</span><span class="cj" style="width:12px">本</span><span class="cj" style="width:12px">库</span></div>
<div class="t" style="left:69px;top:123.85px;font-size:12px;color:#000;"><span class="cj" style="width:12px">函</span><span class="cj" style="width:12px">数</span></div>
<div class="a" style="left:114.5px;top:120px;width:19px;height:19px;background:#ececec;border:1px solid #cfcfcf"></div>
<div class="a" style="left:134.5px;top:120px;width:19px;height:19px;background:#ececec;border:1px solid #cfcfcf"></div>
<svg style="left:121px;top:125px" width="6" height="8"><path d="M4 0.5L0.5 4L4 7.5Z" fill="#000"/></svg>
<svg style="left:142px;top:125px" width="6" height="8"><path d="M0.5 0.5L4 4L0.5 7.5Z" fill="#000"/></svg>
<div class="a" style="left:13px;top:145px;width:142px;height:20px;background:#fff;border:1px solid #7a7a7a"></div>
<div class="t" style="left:17.8px;top:149.0px;font-size:13px;color:#000;">password</div>
<div class="a" style="left:13px;top:167px;width:142px;height:306px;background:#fff;border:1px solid #828282;border-bottom:0"></div>
<div class="a" style="left:15px;top:169px;width:138px;height:20px;background:#d9d9d9;"></div>
<div class="a" style="left:15px;top:168px;width:138px;height:280px;overflow:hidden">
<div class="t" style="left:6.5px;top:4.699999999999999px;font-size:12.2px;color:#000">function include_password_posts_in_search</div>
<div class="t" style="left:6.5px;top:24.7px;font-size:12.2px;color:#000">function reset_password_posts</div>
<div class="t" style="left:6.5px;top:44.7px;font-size:12.2px;color:#000">function disable_reset_lost_password</div>
</div>
<div class="a" style="left:15px;top:454px;width:139px;height:17px;background:#f0f0f0;"></div>
<div class="a" style="left:32px;top:455px;width:48px;height:15px;background:#cdcdcd;"></div>
<svg style="left:20px;top:458px" width="7" height="9"><path d="M5.5 0.5L1.5 4.5L5.5 8.5" fill="none" stroke="#555" stroke-width="2.2"/></svg>
<svg style="left:142px;top:458px" width="7" height="9"><path d="M1.5 0.5L5.5 4.5L1.5 8.5" fill="none" stroke="#555" stroke-width="2.2"/></svg>
<div class="a" style="left:13px;top:471px;width:142px;height:2px;background:#828282;"></div>
<div class="a" style="left:155px;top:115px;width:1px;height:358px;background:#fff;"></div>
<div class="a" style="left:156px;top:115px;width:2px;height:358px;background:#e3e3e3;"></div>
<div class="a" style="left:158px;top:115px;width:593px;height:358px;background:#fff;"></div>
<div class="a" style="left:158px;top:115px;width:2px;height:358px;background:#a0a0a0;"></div>
<div class="a" style="left:160px;top:115px;width:591px;height:1px;background:#a0a0a0;"></div>
<div class="a" style="left:160px;top:116px;width:573px;height:20px;background:#f0f0f0;"></div>
<div class="a" style="left:160px;top:136px;width:573px;height:1px;background:#000;"></div>
<div class="a" style="left:211px;top:116px;width:1px;height:20px;background:#000080;"></div>
<div class="a" style="left:213px;top:126px;width:3px;height:1px;background:#000080;"></div>
<div class="a" style="left:219px;top:126px;width:3px;height:1px;background:#000080;"></div>
<div class="a" style="left:225px;top:126px;width:3px;height:1px;background:#000080;"></div>
<div class="a" style="left:231px;top:126px;width:3px;height:1px;background:#000080;"></div>
<div class="a" style="left:235px;top:126px;width:6px;height:1px;background:#000080;"></div>
<div class="a" style="left:238px;top:124px;width:1px;height:7px;background:#000080;"></div>
<div class="a" style="left:243px;top:126px;width:3px;height:1px;background:#000080;"></div>
<div class="a" style="left:249px;top:126px;width:3px;height:1px;background:#000080;"></div>
<div class="a" style="left:255px;top:126px;width:3px;height:1px;background:#000080;"></div>
<div class="a" style="left:261px;top:126px;width:3px;height:1px;background:#000080;"></div>
<div class="t" style="left:264.75px;top:120.93px;font-size:12.5px;color:#000080;">1</div>
<div class="a" style="left:273px;top:126px;width:3px;height:1px;background:#000080;"></div>
<div class="a" style="left:279px;top:126px;width:3px;height:1px;background:#000080;"></div>
<div class="a" style="left:285px;top:126px;width:3px;height:1px;background:#000080;"></div>
<div class="a" style="left:291px;top:126px;width:3px;height:1px;background:#000080;"></div>
<div class="a" style="left:295px;top:126px;width:6px;height:1px;background:#000080;"></div>
<div class="a" style="left:298px;top:124px;width:1px;height:7px;background:#000080;"></div>
<div class="a" style="left:303px;top:126px;width:3px;height:1px;background:#000080;"></div>
<div class="a" style="left:309px;top:126px;width:3px;height:1px;background:#000080;"></div>
<div class="a" style="left:315px;top:126px;width:3px;height:1px;background:#000080;"></div>
<div class="a" style="left:321px;top:126px;width:3px;height:1px;background:#000080;"></div>
<div class="t" style="left:324.75px;top:120.93px;font-size:12.5px;color:#000080;">2</div>
<div class="a" style="left:333px;top:126px;width:3px;height:1px;background:#000080;"></div>
<div class="a" style="left:339px;top:126px;width:3px;height:1px;background:#000080;"></div>
<div class="a" style="left:345px;top:126px;width:3px;height:1px;background:#000080;"></div>
<div class="a" style="left:351px;top:126px;width:3px;height:1px;background:#000080;"></div>
<div class="a" style="left:355px;top:126px;width:6px;height:1px;background:#000080;"></div>
<div class="a" style="left:358px;top:124px;width:1px;height:7px;background:#000080;"></div>
<div class="a" style="left:363px;top:126px;width:3px;height:1px;background:#000080;"></div>
<div class="a" style="left:369px;top:126px;width:3px;height:1px;background:#000080;"></div>
<div class="a" style="left:375px;top:126px;width:3px;height:1px;background:#000080;"></div>
<div class="a" style="left:381px;top:126px;width:3px;height:1px;background:#000080;"></div>
<div class="t" style="left:384.75px;top:120.93px;font-size:12.5px;color:#000080;">3</div>
<div class="a" style="left:393px;top:126px;width:3px;height:1px;background:#000080;"></div>
<div class="a" style="left:399px;top:126px;width:3px;height:1px;background:#000080;"></div>
<div class="a" style="left:405px;top:126px;width:3px;height:1px;background:#000080;"></div>
<div class="a" style="left:411px;top:126px;width:3px;height:1px;background:#000080;"></div>
<div class="a" style="left:415px;top:126px;width:6px;height:1px;background:#000080;"></div>
<div class="a" style="left:418px;top:124px;width:1px;height:7px;background:#000080;"></div>
<div class="a" style="left:423px;top:126px;width:3px;height:1px;background:#000080;"></div>
<div class="a" style="left:429px;top:126px;width:3px;height:1px;background:#000080;"></div>
<div class="a" style="left:435px;top:126px;width:3px;height:1px;background:#000080;"></div>
<div class="a" style="left:441px;top:126px;width:3px;height:1px;background:#000080;"></div>
<div class="t" style="left:444.75px;top:120.93px;font-size:12.5px;color:#000080;">4</div>
<div class="a" style="left:453px;top:126px;width:3px;height:1px;background:#000080;"></div>
<div class="a" style="left:459px;top:126px;width:3px;height:1px;background:#000080;"></div>
<div class="a" style="left:465px;top:126px;width:3px;height:1px;background:#000080;"></div>
<div class="a" style="left:471px;top:126px;width:3px;height:1px;background:#000080;"></div>
<div class="a" style="left:475px;top:126px;width:6px;height:1px;background:#000080;"></div>
<div class="a" style="left:478px;top:124px;width:1px;height:7px;background:#000080;"></div>
<div class="a" style="left:483px;top:126px;width:3px;height:1px;background:#000080;"></div>
<div class="a" style="left:489px;top:126px;width:3px;height:1px;background:#000080;"></div>
<div class="a" style="left:495px;top:126px;width:3px;height:1px;background:#000080;"></div>
<div class="a" style="left:501px;top:126px;width:3px;height:1px;background:#000080;"></div>
<div class="a" style="left:505px;top:116px;width:6px;height:20px;background:#000080;"></div>
<div class="t" style="left:505.3px;top:120.93px;font-size:12.5px;color:#fff;">5</div>
<div class="a" style="left:513px;top:126px;width:3px;height:1px;background:#000080;"></div>
<div class="a" style="left:519px;top:126px;width:3px;height:1px;background:#000080;"></div>
<div class="a" style="left:525px;top:126px;width:3px;height:1px;background:#000080;"></div>
<div class="a" style="left:531px;top:126px;width:3px;height:1px;background:#000080;"></div>
<div class="a" style="left:535px;top:126px;width:6px;height:1px;background:#000080;"></div>
<div class="a" style="left:538px;top:124px;width:1px;height:7px;background:#000080;"></div>
<div class="a" style="left:543px;top:126px;width:3px;height:1px;background:#000080;"></div>
<div class="a" style="left:549px;top:126px;width:3px;height:1px;background:#000080;"></div>
<div class="a" style="left:555px;top:126px;width:3px;height:1px;background:#000080;"></div>
<div class="a" style="left:561px;top:126px;width:3px;height:1px;background:#000080;"></div>
<div class="t" style="left:564.75px;top:120.93px;font-size:12.5px;color:#000080;">6</div>
<div class="a" style="left:573px;top:126px;width:3px;height:1px;background:#000080;"></div>
<div class="a" style="left:579px;top:126px;width:3px;height:1px;background:#000080;"></div>
<div class="a" style="left:585px;top:126px;width:3px;height:1px;background:#000080;"></div>
<div class="a" style="left:591px;top:126px;width:3px;height:1px;background:#000080;"></div>
<div class="a" style="left:595px;top:126px;width:6px;height:1px;background:#000080;"></div>
<div class="a" style="left:598px;top:124px;width:1px;height:7px;background:#000080;"></div>
<div class="a" style="left:603px;top:126px;width:3px;height:1px;background:#000080;"></div>
<div class="a" style="left:609px;top:126px;width:3px;height:1px;background:#000080;"></div>
<div class="a" style="left:615px;top:126px;width:3px;height:1px;background:#000080;"></div>
<div class="a" style="left:621px;top:126px;width:3px;height:1px;background:#000080;"></div>
<div class="t" style="left:624.75px;top:120.93px;font-size:12.5px;color:#000080;">7</div>
<div class="a" style="left:633px;top:126px;width:3px;height:1px;background:#000080;"></div>
<div class="a" style="left:639px;top:126px;width:3px;height:1px;background:#000080;"></div>
<div class="a" style="left:645px;top:126px;width:3px;height:1px;background:#000080;"></div>
<div class="a" style="left:651px;top:126px;width:3px;height:1px;background:#000080;"></div>
<div class="a" style="left:655px;top:126px;width:6px;height:1px;background:#000080;"></div>
<div class="a" style="left:658px;top:124px;width:1px;height:7px;background:#000080;"></div>
<div class="a" style="left:663px;top:126px;width:3px;height:1px;background:#000080;"></div>
<div class="a" style="left:669px;top:126px;width:3px;height:1px;background:#000080;"></div>
<div class="a" style="left:675px;top:126px;width:3px;height:1px;background:#000080;"></div>
<div class="a" style="left:681px;top:126px;width:3px;height:1px;background:#000080;"></div>
<div class="t" style="left:684.75px;top:120.93px;font-size:12.5px;color:#000080;">8</div>
<div class="a" style="left:693px;top:126px;width:3px;height:1px;background:#000080;"></div>
<div class="a" style="left:699px;top:126px;width:3px;height:1px;background:#000080;"></div>
<div class="a" style="left:705px;top:126px;width:3px;height:1px;background:#000080;"></div>
<div class="a" style="left:711px;top:126px;width:3px;height:1px;background:#000080;"></div>
<div class="a" style="left:715px;top:126px;width:6px;height:1px;background:#000080;"></div>
<div class="a" style="left:718px;top:124px;width:1px;height:7px;background:#000080;"></div>
<div class="a" style="left:723px;top:126px;width:3px;height:1px;background:#000080;"></div>
<div class="a" style="left:729px;top:126px;width:3px;height:1px;background:#000080;"></div>
<div class="a" style="left:212px;top:126px;width:2px;height:1px;background:#000080;"></div>
<div class="a" style="left:160px;top:137px;width:573px;height:336px;overflow:hidden">
<div class="t" style="left:-6px;top:4.150000000000006px;width:40px;text-align:right;font-size:14px;color:#9a9a9a">22</div>
<div class="t" style="left:51px;top:4.599999999999994px;font-size:13.5px;letter-spacing:0.000px"><svg style="position:relative;display:inline-block;vertical-align:0px;margin-left:1.5px" width="6" height="10"><path d="M2.6 0.3H6V10H2.6V5.5A2.6 2.6 0 0 1 2.6 0.3Z" fill="#cdcdcd"/><path d="M2.6 0.3H4V5.5H2.6A2.6 2.6 0 0 1 2.6 0.3Z" fill="#a6a6a6"/><path d="M4.3 1.5V10" stroke="#e4e4e4" stroke-width="0.6"/></svg></div>
<div class="t" style="left:-6px;top:23.150000000000006px;width:40px;text-align:right;font-size:14px;color:#9a9a9a">23</div>
<div class="t" style="left:51px;top:23.599999999999994px;font-size:13.5px;letter-spacing:0.127px"><span style="color:#6a0000">add_action(</span><span style="color:#ea00ea">'init'</span><span style="color:#6a0000">, </span><span style="color:#ea00ea">'hc_buffer_start'</span><span style="color:#6a0000">);</span><svg style="position:relative;display:inline-block;vertical-align:0px;margin-left:1.5px" width="6" height="10"><path d="M2.6 0.3H6V10H2.6V5.5A2.6 2.6 0 0 1 2.6 0.3Z" fill="#cdcdcd"/><path d="M2.6 0.3H4V5.5H2.6A2.6 2.6 0 0 1 2.6 0.3Z" fill="#a6a6a6"/><path d="M4.3 1.5V10" stroke="#e4e4e4" stroke-width="0.6"/></svg></div>
<div class="t" style="left:-6px;top:42.150000000000006px;width:40px;text-align:right;font-size:14px;color:#9a9a9a">24</div>
<div class="t" style="left:51px;top:42.599999999999994px;font-size:13.5px;letter-spacing:0.143px"><span style="color:#007000"><span style="display:inline-block;width:11.8px;letter-spacing:0"><span style="display:inline-block;transform:scaleX(1.4);transform-origin:0 0">//</span></span>add_action('shutdown', 'hc_buffer_end');</span><svg style="position:relative;display:inline-block;vertical-align:0px;margin-left:1.5px" width="6" height="10"><path d="M2.6 0.3H6V10H2.6V5.5A2.6 2.6 0 0 1 2.6 0.3Z" fill="#cdcdcd"/><path d="M2.6 0.3H4V5.5H2.6A2.6 2.6 0 0 1 2.6 0.3Z" fill="#a6a6a6"/><path d="M4.3 1.5V10" stroke="#e4e4e4" stroke-width="0.6"/></svg></div>
<div class="t" style="left:-6px;top:61.150000000000006px;width:40px;text-align:right;font-size:14px;color:#9a9a9a">25</div>
<div class="t" style="left:51px;top:61.599999999999994px;font-size:13.5px;letter-spacing:-0.000px"><span style="color:#007000"><span style="display:inline-block;width:11.8px;letter-spacing:0"><span style="display:inline-block;transform:scaleX(1.4);transform-origin:0 0">//</span></span><span class="cj" style="width:12.98px">禁</span><span class="cj" style="width:12.98px">止</span><span class="cj" style="width:12.98px">后</span><span class="cj" style="width:12.98px">台</span><span class="cj" style="width:12.98px">显</span><span class="cj" style="width:12.98px">示</span><span class="cj" style="width:12.98px">更</span><span class="cj" style="width:12.98px">新</span><span class="cj" style="width:12.98px">，</span><span class="cj" style="width:12.98px">关</span><span class="cj" style="width:12.98px">闭</span><span class="cj" style="width:12.98px">核</span><span class="cj" style="width:12.98px">心</span><span class="cj" style="width:12.98px">提</span><span class="cj" style="width:12.98px">示</span></span><svg style="position:relative;display:inline-block;vertical-align:0px;margin-left:1.5px" width="6" height="10"><path d="M2.6 0.3H6V10H2.6V5.5A2.6 2.6 0 0 1 2.6 0.3Z" fill="#cdcdcd"/><path d="M2.6 0.3H4V5.5H2.6A2.6 2.6 0 0 1 2.6 0.3Z" fill="#a6a6a6"/><path d="M4.3 1.5V10" stroke="#e4e4e4" stroke-width="0.6"/></svg></div>
<div class="t" style="left:-6px;top:80.15px;width:40px;text-align:right;font-size:14px;color:#9a9a9a">26</div>
<div class="t" style="left:51px;top:80.6px;font-size:13.5px;letter-spacing:0.036px"><span style="color:#6a0000">add_filter(</span><span style="color:#ea00ea">'pre_site_transient_update_core'</span><span style="color:#6a0000">,     </span><span style="color:#e01010">create_function</span><span style="color:#6a0000">(</span><span style="color:#ea00ea">'$a'</span><span style="color:#6a0000">, </span><span style="color:#ea00ea">"return null;"</span><span style="color:#6a0000">));</span><svg style="position:relative;display:inline-block;vertical-align:0px;margin-left:1.5px" width="6" height="10"><path d="M2.6 0.3H6V10H2.6V5.5A2.6 2.6 0 0 1 2.6 0.3Z" fill="#cdcdcd"/><path d="M2.6 0.3H4V5.5H2.6A2.6 2.6 0 0 1 2.6 0.3Z" fill="#a6a6a6"/><path d="M4.3 1.5V10" stroke="#e4e4e4" stroke-width="0.6"/></svg></div>
<div class="t" style="left:-6px;top:99.15px;width:40px;text-align:right;font-size:14px;color:#9a9a9a">27</div>
<div class="t" style="left:51px;top:99.6px;font-size:13.5px;letter-spacing:0.163px"><span style="color:#007000"><span style="display:inline-block;width:11.8px;letter-spacing:0"><span style="display:inline-block;transform:scaleX(1.4);transform-origin:0 0">//</span></span><span class="cj" style="width:12.98px">禁</span><span class="cj" style="width:12.98px">止</span> Wordpress <span class="cj" style="width:12.98px">检</span><span class="cj" style="width:12.98px">查</span><span class="cj" style="width:12.98px">更</span><span class="cj" style="width:12.98px">新</span></span><svg style="position:relative;display:inline-block;vertical-align:0px;margin-left:1.5px" width="6" height="10"><path d="M2.6 0.3H6V10H2.6V5.5A2.6 2.6 0 0 1 2.6 0.3Z" fill="#cdcdcd"/><path d="M2.6 0.3H4V5.5H2.6A2.6 2.6 0 0 1 2.6 0.3Z" fill="#a6a6a6"/><path d="M4.3 1.5V10" stroke="#e4e4e4" stroke-width="0.6"/></svg></div>
<div class="t" style="left:-6px;top:118.15px;width:40px;text-align:right;font-size:14px;color:#9a9a9a">28</div>
<div class="t" style="left:51px;top:118.6px;font-size:13.5px;letter-spacing:0.000px"><span style="color:#6a0000">remove_action(</span><span style="color:#ea00ea">'admin_init'</span><span style="color:#6a0000">, </span><span style="color:#ea00ea">'_maybe_update_core'</span><span style="color:#6a0000">); </span><svg style="position:relative;display:inline-block;vertical-align:0px;margin-left:1.5px" width="6" height="10"><path d="M2.6 0.3H6V10H2.6V5.5A2.6 2.6 0 0 1 2.6 0.3Z" fill="#cdcdcd"/><path d="M2.6 0.3H4V5.5H2.6A2.6 2.6 0 0 1 2.6 0.3Z" fill="#a6a6a6"/><path d="M4.3 1.5V10" stroke="#e4e4e4" stroke-width="0.6"/></svg></div>
<div class="t" style="left:-6px;top:137.14999999999998px;width:40px;text-align:right;font-size:14px;color:#9a9a9a">29</div>
<div class="t" style="left:51px;top:137.60000000000002px;font-size:13.5px;letter-spacing:-0.000px"><span style="color:#007000"><span style="display:inline-block;width:11.8px;letter-spacing:0"><span style="display:inline-block;transform:scaleX(1.4);transform-origin:0 0">//</span></span><span class="cj" style="width:12.98px">使</span><span class="cj" style="width:12.98px">未</span><span class="cj" style="width:12.98px">登</span><span class="cj" style="width:12.98px">录</span><span class="cj" style="width:12.98px">用</span><span class="cj" style="width:12.98px">户</span><span class="cj" style="width:12.98px">的</span><span class="cj" style="width:12.98px">搜</span><span class="cj" style="width:12.98px">索</span><span class="cj" style="width:12.98px">结</span><span class="cj" style="width:12.98px">果</span><span class="cj" style="width:12.98px">包</span><span class="cj" style="width:12.98px">含</span><span class="cj" style="width:12.98px">加</span><span class="cj" style="width:12.98px">密</span><span class="cj" style="width:12.98px">文</span><span class="cj" style="width:12.98px">章</span><span class="cj" style="width:12.98px">的</span><span class="cj" style="width:12.98px">代</span><span class="cj" style="width:12.98px">码</span></span><svg style="position:relative;display:inline-block;vertical-align:0px;margin-left:1.5px" width="6" height="10"><path d="M2.6 0.3H6V10H2.6V5.5A2.6 2.6 0 0 1 2.6 0.3Z" fill="#cdcdcd"/><path d="M2.6 0.3H4V5.5H2.6A2.6 2.6 0 0 1 2.6 0.3Z" fill="#a6a6a6"/><path d="M4.3 1.5V10" stroke="#e4e4e4" stroke-width="0.6"/></svg></div>
<div class="t" style="left:-6px;top:156.14999999999998px;width:40px;text-align:right;font-size:14px;color:#9a9a9a">30</div>
<div class="t" style="left:51px;top:156.60000000000002px;font-size:13.5px;letter-spacing:-0.058px"><span style="color:#6a0000">add_filter( </span><span style="color:#ea00ea">'posts_search'</span><span style="color:#6a0000">, </span><span style="color:#ea00ea">'include_password_posts_in_search'</span><span style="color:#6a0000"> );</span><svg style="position:relative;display:inline-block;vertical-align:0px;margin-left:1.5px" width="6" height="10"><path d="M2.6 0.3H6V10H2.6V5.5A2.6 2.6 0 0 1 2.6 0.3Z" fill="#cdcdcd"/><path d="M2.6 0.3H4V5.5H2.6A2.6 2.6 0 0 1 2.6 0.3Z" fill="#a6a6a6"/><path d="M4.3 1.5V10" stroke="#e4e4e4" stroke-width="0.6"/></svg></div>
<div class="t" style="left:-6px;top:175.14999999999998px;width:40px;text-align:right;font-size:14px;color:#9a9a9a">31</div>
<div class="t" style="left:51px;top:175.60000000000002px;font-size:13.5px;letter-spacing:-0.013px"><span style="color:#0000c0">function </span><span style="color:#6a0000">include_password_posts_in_search( </span><span style="color:#0000ff">$</span><span style="color:#008080">search</span><span style="color:#6a0000"> ) {</span><svg style="position:relative;display:inline-block;vertical-align:0px;margin-left:1.5px" width="6" height="10"><path d="M2.6 0.3H6V10H2.6V5.5A2.6 2.6 0 0 1 2.6 0.3Z" fill="#cdcdcd"/><path d="M2.6 0.3H4V5.5H2.6A2.6 2.6 0 0 1 2.6 0.3Z" fill="#a6a6a6"/><path d="M4.3 1.5V10" stroke="#e4e4e4" stroke-width="0.6"/></svg></div>
<div class="t" style="left:-6px;top:194.14999999999998px;width:40px;text-align:right;font-size:14px;color:#9a9a9a">32</div>
<div class="t" style="left:67px;top:194.60000000000002px;font-size:13.5px;letter-spacing:0.168px"><span style="color:#0000c0">global </span><span style="color:#0000ff">$</span><span style="color:#008080">wpdb</span><span style="color:#6a0000">;</span><svg style="position:relative;display:inline-block;vertical-align:0px;margin-left:1.5px" width="6" height="10"><path d="M2.6 0.3H6V10H2.6V5.5A2.6 2.6 0 0 1 2.6 0.3Z" fill="#cdcdcd"/><path d="M2.6 0.3H4V5.5H2.6A2.6 2.6 0 0 1 2.6 0.3Z" fill="#a6a6a6"/><path d="M4.3 1.5V10" stroke="#e4e4e4" stroke-width="0.6"/></svg></div>
<div class="t" style="left:-6px;top:213.14999999999998px;width:40px;text-align:right;font-size:14px;color:#9a9a9a">33</div>
<div class="t" style="left:67px;top:213.60000000000002px;font-size:13.5px;letter-spacing:-0.119px"><span style="color:#0000c0">if</span><span style="color:#6a0000">( !is_user_logged_in() ) {</span><svg style="position:relative;display:inline-block;vertical-align:0px;margin-left:1.5px" width="6" height="10"><path d="M2.6 0.3H6V10H2.6V5.5A2.6 2.6 0 0 1 2.6 0.3Z" fill="#cdcdcd"/><path d="M2.6 0.3H4V5.5H2.6A2.6 2.6 0 0 1 2.6 0.3Z" fill="#a6a6a6"/><path d="M4.3 1.5V10" stroke="#e4e4e4" stroke-width="0.6"/></svg></div>
<div class="t" style="left:-6px;top:232.14999999999998px;width:40px;text-align:right;font-size:14px;color:#9a9a9a">34</div>
<div class="t" style="left:83px;top:232.60000000000002px;font-size:13.5px;letter-spacing:0.312px"><span style="color:#0000ff">$</span><span style="color:#008080">pattern</span><span style="color:#6a0000"> = </span><span style="color:#ea00ea">" AND ({$wpdb-&gt;prefix}posts.post_password = '')"</span><span style="color:#6a0000">;</span><svg style="position:relative;display:inline-block;vertical-align:0px;margin-left:1.5px" width="6" height="10"><path d="M2.6 0.3H6V10H2.6V5.5A2.6 2.6 0 0 1 2.6 0.3Z" fill="#cdcdcd"/><path d="M2.6 0.3H4V5.5H2.6A2.6 2.6 0 0 1 2.6 0.3Z" fill="#a6a6a6"/><path d="M4.3 1.5V10" stroke="#e4e4e4" stroke-width="0.6"/></svg></div>
<div class="t" style="left:-6px;top:251.14999999999998px;width:40px;text-align:right;font-size:14px;color:#9a9a9a">35</div>
<div class="t" style="left:83px;top:251.60000000000002px;font-size:13.5px;letter-spacing:0.073px"><span style="color:#0000ff">$</span><span style="color:#008080">search</span><span style="color:#6a0000"> = </span><span style="color:#e01010">str_replace</span><span style="color:#6a0000">( </span><span style="color:#0000ff">$</span><span style="color:#008080">pattern</span><span style="color:#6a0000">, </span><span style="color:#ea00ea">''</span><span style="color:#6a0000">, </span><span style="color:#0000ff">$</span><span style="color:#008080">search</span><span style="color:#6a0000"> );</span><svg style="position:relative;display:inline-block;vertical-align:0px;margin-left:1.5px" width="6" height="10"><path d="M2.6 0.3H6V10H2.6V5.5A2.6 2.6 0 0 1 2.6 0.3Z" fill="#cdcdcd"/><path d="M2.6 0.3H4V5.5H2.6A2.6 2.6 0 0 1 2.6 0.3Z" fill="#a6a6a6"/><path d="M4.3 1.5V10" stroke="#e4e4e4" stroke-width="0.6"/></svg></div>
<div class="t" style="left:-6px;top:270.15px;width:40px;text-align:right;font-size:14px;color:#9a9a9a">36</div>
<div class="t" style="left:67px;top:270.6px;font-size:13.5px;letter-spacing:0.000px"><span style="color:#6a0000">}</span><svg style="position:relative;display:inline-block;vertical-align:0px;margin-left:1.5px" width="6" height="10"><path d="M2.6 0.3H6V10H2.6V5.5A2.6 2.6 0 0 1 2.6 0.3Z" fill="#cdcdcd"/><path d="M2.6 0.3H4V5.5H2.6A2.6 2.6 0 0 1 2.6 0.3Z" fill="#a6a6a6"/><path d="M4.3 1.5V10" stroke="#e4e4e4" stroke-width="0.6"/></svg></div>
<div class="t" style="left:-6px;top:289.15px;width:40px;text-align:right;font-size:14px;color:#9a9a9a">37</div>
<div class="t" style="left:67px;top:289.6px;font-size:13.5px;letter-spacing:0.080px"><span style="color:#0000c0">return </span><span style="color:#0000ff">$</span><span style="color:#008080">search</span><span style="color:#6a0000">;</span><svg style="position:relative;display:inline-block;vertical-align:0px;margin-left:1.5px" width="6" height="10"><path d="M2.6 0.3H6V10H2.6V5.5A2.6 2.6 0 0 1 2.6 0.3Z" fill="#cdcdcd"/><path d="M2.6 0.3H4V5.5H2.6A2.6 2.6 0 0 1 2.6 0.3Z" fill="#a6a6a6"/><path d="M4.3 1.5V10" stroke="#e4e4e4" stroke-width="0.6"/></svg></div>
<div class="t" style="left:-6px;top:308.15px;width:40px;text-align:right;font-size:14px;color:#9a9a9a">38</div>
<div class="t" style="left:51px;top:308.6px;font-size:13.5px;letter-spacing:0.000px"><span style="color:#6a0000">}</span><svg style="position:relative;display:inline-block;vertical-align:0px;margin-left:1.5px" width="6" height="10"><path d="M2.6 0.3H6V10H2.6V5.5A2.6 2.6 0 0 1 2.6 0.3Z" fill="#cdcdcd"/><path d="M2.6 0.3H4V5.5H2.6A2.6 2.6 0 0 1 2.6 0.3Z" fill="#a6a6a6"/><path d="M4.3 1.5V10" stroke="#e4e4e4" stroke-width="0.6"/></svg></div>
<div class="t" style="left:-6px;top:327.15px;width:40px;text-align:right;font-size:14px;color:#9a9a9a">39</div>
<div class="t" style="left:51px;top:327.6px;font-size:13.5px;letter-spacing:0.000px"><svg style="position:relative;display:inline-block;vertical-align:0px;margin-left:1.5px" width="6" height="10"><path d="M2.6 0.3H6V10H2.6V5.5A2.6 2.6 0 0 1 2.6 0.3Z" fill="#cdcdcd"/><path d="M2.6 0.3H4V5.5H2.6A2.6 2.6 0 0 1 2.6 0.3Z" fill="#a6a6a6"/><path d="M4.3 1.5V10" stroke="#e4e4e4" stroke-width="0.6"/></svg></div>
</div>
<svg style="left:162px;top:313.5px" width="6" height="10"><path d="M0 0L5.5 4.7L0 9.4Z" fill="#000080"/></svg>
<div class="a" style="left:199px;top:314.5px;width:9px;height:9px;background:#fff;border:1px solid #909090"></div>
<div class="a" style="left:201px;top:318.5px;width:5px;height:1px;background:#909090;"></div>
<div class="a" style="left:199px;top:352.5px;width:9px;height:9px;background:#fff;border:1px solid #909090"></div>
<div class="a" style="left:201px;top:356.5px;width:5px;height:1px;background:#909090;"></div>
<div class="a" style="left:733px;top:116px;width:17px;height:357px;background:#f0f0f0;"></div>
<div class="a" style="left:732px;top:116px;width:17px;height:8px;background:#f0f0f0;border:1px solid #fff;border-right-color:#9a9a9a;border-bottom-color:#9a9a9a;box-shadow:inset -1px -1px 0 #d0d0d0"></div>
<svg style="left:736.5px;top:130.5px" width="9" height="7"><path d="M1 5.5L4.5 2L8 5.5" fill="none" stroke="#555" stroke-width="2"/></svg>
<div class="a" style="left:733px;top:154px;width:15px;height:17px;background:#cdcdcd;"></div>
<svg style="left:736.5px;top:461.5px" width="9" height="7"><path d="M1 1.5L4.5 5L8 1.5" fill="none" stroke="#555" stroke-width="2"/></svg>
<div class="a" style="left:13px;top:473px;width:738px;height:26px;background:#fff;"></div>
<div class="a" style="left:13px;top:473px;width:738px;height:1px;background:#e8e8e8;"></div>
<div class="a" style="left:38px;top:475px;width:122px;height:23px;background:#cce4f7;border:1px solid #a6cdee"></div>
<svg style="left:16px;top:477px" width="16" height="17"><defs><linearGradient id="fg" x1="0" y1="0" x2="0" y2="1"><stop offset="0" stop-color="#fbeaa0"/><stop offset="0.5" stop-color="#f8e08a"/><stop offset="1" stop-color="#f3c063"/></linearGradient></defs><path d="M12.5 5.5h2.2v10h-2.2" fill="#fbeec0" stroke="#c9a650" stroke-width="0.9"/><rect x="1.5" y="1.5" width="11.5" height="14.5" fill="url(#fg)" stroke="#c5a24c"/></svg>
<svg style="left:47px;top:482px" width="11" height="10"><path d="M5.5 1L9.5 5L5.5 9L1.5 5Z" fill="none" stroke="#8aa0b8" stroke-width="0.8"/><path d="M4 1L7.5 5L4 9L0.5 5Z" fill="#6fc0d0" stroke="#1a2f5a" stroke-width="1.2"/></svg>
<div class="t" style="left:59.3px;top:480.0px;font-size:13px;color:#000;">functions.php</div>
<svg style="left:147px;top:482px" width="11" height="10"><path d="M1.5 1.5L9.5 8.5M9.5 1.5L1.5 8.5" stroke="#d27070" stroke-width="3"/><path d="M1.5 1.5L9.5 8.5M9.5 1.5L1.5 8.5" stroke="#fff3f3" stroke-width="1.2"/></svg>
<div class="a" style="left:13px;top:499px;width:738px;height:1px;background:#dadada;"></div>
<div class="a" style="left:13px;top:500px;width:738px;height:19px;background:#f0f0f0;"></div>
<div class="t" style="left:15px;top:505.35px;font-size:12px;color:#000;"><span class="cj" style="width:12px">如</span><span class="cj" style="width:12px">需</span><span class="cj" style="width:12px">帮</span><span class="cj" style="width:12px">助</span><span class="cj" style="width:12px">，</span><span class="cj" style="width:12px">请</span><span class="cj" style="width:12px">按</span><span class="cj" style="width:12px">键</span><span class="cj" style="width:12px">盘</span> F1 <span class="cj" style="width:12px">键</span></div>
<div class="a" style="left:258px;top:502px;width:1px;height:16px;background:#d7d7d7;"></div>
<div class="a" style="left:330px;top:502px;width:1px;height:16px;background:#d7d7d7;"></div>
<div class="a" style="left:387px;top:502px;width:1px;height:16px;background:#d7d7d7;"></div>
<div class="a" style="left:446px;top:502px;width:1px;height:16px;background:#d7d7d7;"></div>
<div class="a" style="left:501px;top:502px;width:1px;height:16px;background:#d7d7d7;"></div>
<div class="a" style="left:558px;top:502px;width:1px;height:16px;background:#d7d7d7;"></div>
<div class="a" style="left:589px;top:502px;width:1px;height:16px;background:#d7d7d7;"></div>
<div class="a" style="left:621px;top:502px;width:1px;height:16px;background:#d7d7d7;"></div>
<div class="a" style="left:653px;top:502px;width:1px;height:16px;background:#d7d7d7;"></div>
<div class="a" style="left:730px;top:502px;width:1px;height:16px;background:#d7d7d7;"></div>
<div class="t" style="left:189px;top:504.93px;font-size:12.5px;color:#000;"><span class="cj" style="width:12px">行</span> 31</div>
<div class="t" style="left:262px;top:504.93px;font-size:12.5px;color:#000;"><span class="cj" style="width:12px">列</span> 50</div>
<div class="t" style="left:335px;top:504.93px;font-size:12.5px;color:#000;">505</div>
<div class="t" style="left:392px;top:504.93px;font-size:12.5px;color:#000;">68</div>
<div class="t" style="left:450px;top:504.93px;font-size:12.5px;color:#000;">PC</div>
<div class="t" style="left:505.7px;top:504.93px;font-size:12.5px;color:#000;">UTF-8</div>
<div class="t" style="left:628px;top:504.9px;width:100px;text-align:right;font-size:12.5px">19,943</div>
<div class="a" style="left:746px;top:509px;width:2px;height:2px;background:#b5b5b5;"></div>
<div class="a" style="left:743px;top:512px;width:2px;height:2px;background:#b5b5b5;"></div>
<div class="a" style="left:746px;top:512px;width:2px;height:2px;background:#b5b5b5;"></div>
<div class="a" style="left:740px;top:515px;width:2px;height:2px;background:#b5b5b5;"></div>
<div class="a" style="left:743px;top:515px;width:2px;height:2px;background:#b5b5b5;"></div>
<div class="a" style="left:746px;top:515px;width:2px;height:2px;background:#b5b5b5;"></div>
<div class="a" style="left:12px;top:42px;width:740px;height:478px;border:1px solid #86c8da;border-top:0"></div>
</body></html>
